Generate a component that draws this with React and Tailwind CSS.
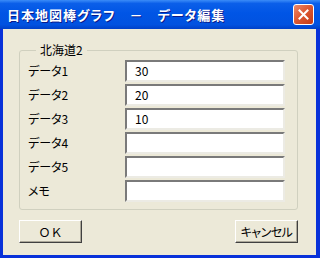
import React from 'react';

const rows = [
  { label: 'データ1', value: '30' },
  { label: 'データ2', value: '20' },
  { label: 'データ3', value: '10' },
  { label: 'データ4', value: '' },
  { label: 'データ5', value: '' },
  { label: 'メモ', value: '' },
];

const btn =
  "w-[63px] h-[23px] bg-[#ece9d8] border border-t-white border-l-white border-r-[#404040] border-b-[#404040] shadow-[inset_-1px_-1px_0_#aca899] text-[12px] leading-[14px] text-black flex items-center justify-center";

export default function App() {
  return (
    <div className="w-[320px] h-[258px] flex flex-col bg-[#0831d9] font-['Noto_Sans_CJK_JP',sans-serif] [font-feature-settings:'palt'] select-none">
      {/* title bar */}
      <div className="h-[29px] shrink-0 flex items-center justify-between pl-[7px] pr-[6px] bg-[linear-gradient(to_bottom,#3b8cf8_0%,#0b5fe9_12%,#0055e5_45%,#0152e0_85%,#0040c8_100%)]">
        <span className="text-white font-bold text-[13px] leading-[16px] tracking-[1px] [text-shadow:1px_1px_#0a1a8a]">
          日本地図棒グラフ　－　データ編集
        </span>
        <div className="w-[21px] h-[21px] rounded-[3px] border border-white bg-[linear-gradient(135deg,#eb8a6c_0%,#dd5a34_45%,#c53a14_100%)] flex items-center justify-center">
          <svg width="11" height="11" viewBox="0 0 11 11">
            <path d="M1.5 1.5 L9.5 9.5 M9.5 1.5 L1.5 9.5" stroke="white" strokeWidth="2" strokeLinecap="square" />
          </svg>
        </div>
      </div>

      {/* client area */}
      <div className="flex-1 ml-[3px] mr-[4px] mb-[3px] bg-[#ece9d8] flex flex-col pl-[16px] pr-[18px] pt-[14px]">
        <fieldset className="border border-[#d0d0bf] rounded-[3px] pl-[8px] pr-[12px] pb-[7px]">
          <legend className="ml-[8px] px-[4px] text-[12px] leading-[14px] text-black">北海道2</legend>
          <div className="flex flex-col gap-[2px] pt-[3px]">
            {rows.map((r) => (
              <div key={r.label} className="flex items-center h-[22px]">
                <span className="w-[97px] text-[12px] leading-[14px] text-black">{r.label}</span>
                <div className="w-[160px] h-[22px] bg-white border-2 border-t-[#7a7a7a] border-l-[#7a7a7a] border-r-[#ecebe4] border-b-[#ecebe4] flex items-center pl-[8px] text-[12px] leading-[14px] text-black">
                  {r.value}
                </div>
              </div>
            ))}
          </div>
        </fieldset>

        <div className="flex justify-between mt-[10px]">
          <button className={btn + " [font-feature-settings:normal]"}>ＯＫ</button>
          <button className={btn + " tracking-[-0.5px]"}>キャンセル</button>
        </div>
      </div>
    </div>
  );
}
